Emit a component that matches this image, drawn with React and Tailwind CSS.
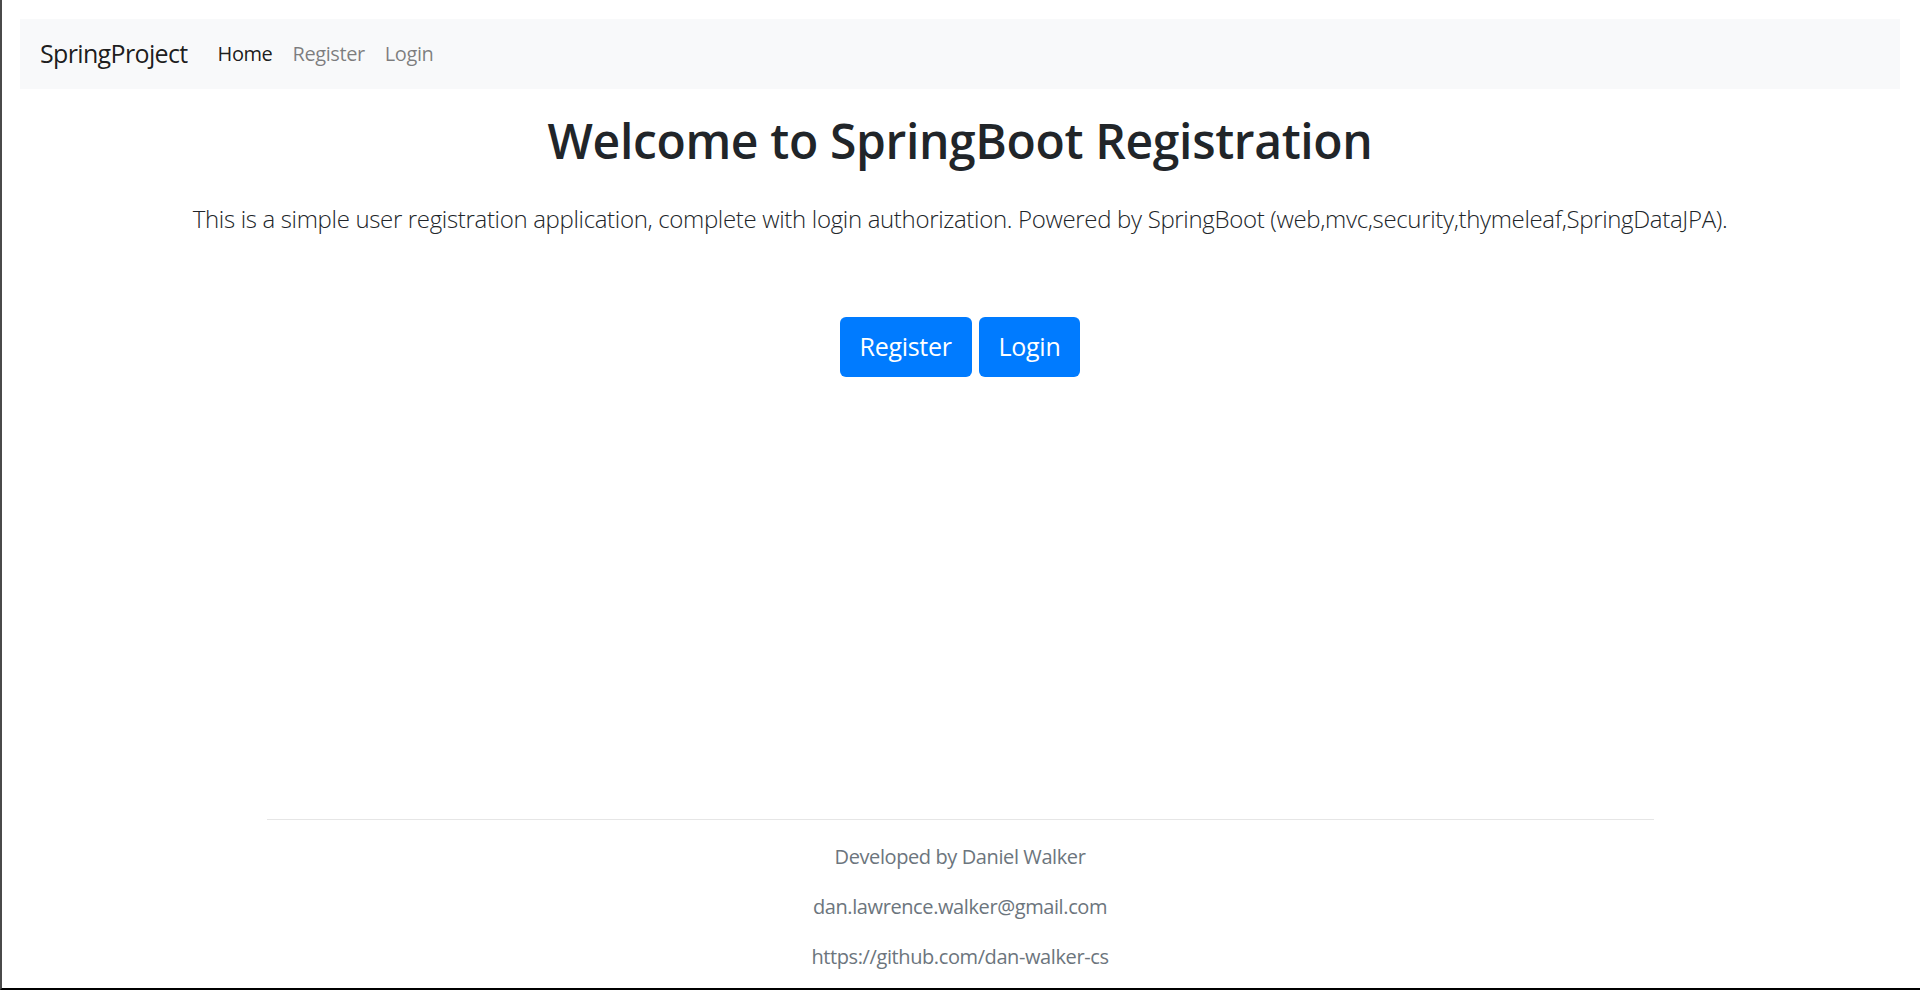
export default function App() {
  return (
    <div className="h-[990px] overflow-hidden bg-white border-l-2 border-b-2 border-l-[#4a4a4a] border-b-black pl-[18px] pr-[20px] pt-[19px] font-['Open_Sans','Noto_Sans',sans-serif]">
      <nav className="h-[70px] bg-[#f8f9fa] flex items-center px-5">
        <a className="text-[25px] tracking-[-0.65px] text-black/90 mr-5">SpringProject</a>
        <a className="text-[20px] tracking-[-0.4px] px-[10px] text-black/90">Home</a>
        <a className="text-[20px] tracking-[-0.4px] px-[10px] text-black/50">Register</a>
        <a className="text-[20px] tracking-[-0.4px] px-[10px] text-black/50">Login</a>
      </nav>

      <div className="text-center text-[#212529]">
        <h1 className="mt-[22px] text-[48px] leading-[60px] font-semibold tracking-[-0.35px]">Welcome to SpringBoot Registration</h1>
        <p className="mt-[29px] text-[24px] leading-[37.5px] font-light tracking-[-0.33px]">
          This is a simple user registration application, complete with login authorization. Powered by SpringBoot (web,mvc,security,thymeleaf,SpringDataJPA).
        </p>
        <div className="mt-[79px] flex justify-center gap-[7px]">
          <button className="h-[60px] px-5 rounded-[6px] bg-[#007bff] text-white text-[25px] tracking-[-0.3px]">Register</button>
          <button className="h-[60px] px-5 rounded-[6px] bg-[#007bff] text-white text-[25px] tracking-[-0.3px]">Login</button>
        </div>
      </div>

      <footer className="mt-[442px] text-center text-[#6c757d] text-[20px] leading-[30px] tracking-[-0.4px]">
        <div className="w-[1387px] mx-auto h-px bg-[#e6e6e6]"></div>
        <p className="mt-[22px] mb-5">Developed by Daniel Walker</p>
        <p className="mb-5">dan.lawrence.walker@gmail.com</p>
        <p>https://github.com/dan-walker-cs</p>
      </footer>
    </div>
  )
}
